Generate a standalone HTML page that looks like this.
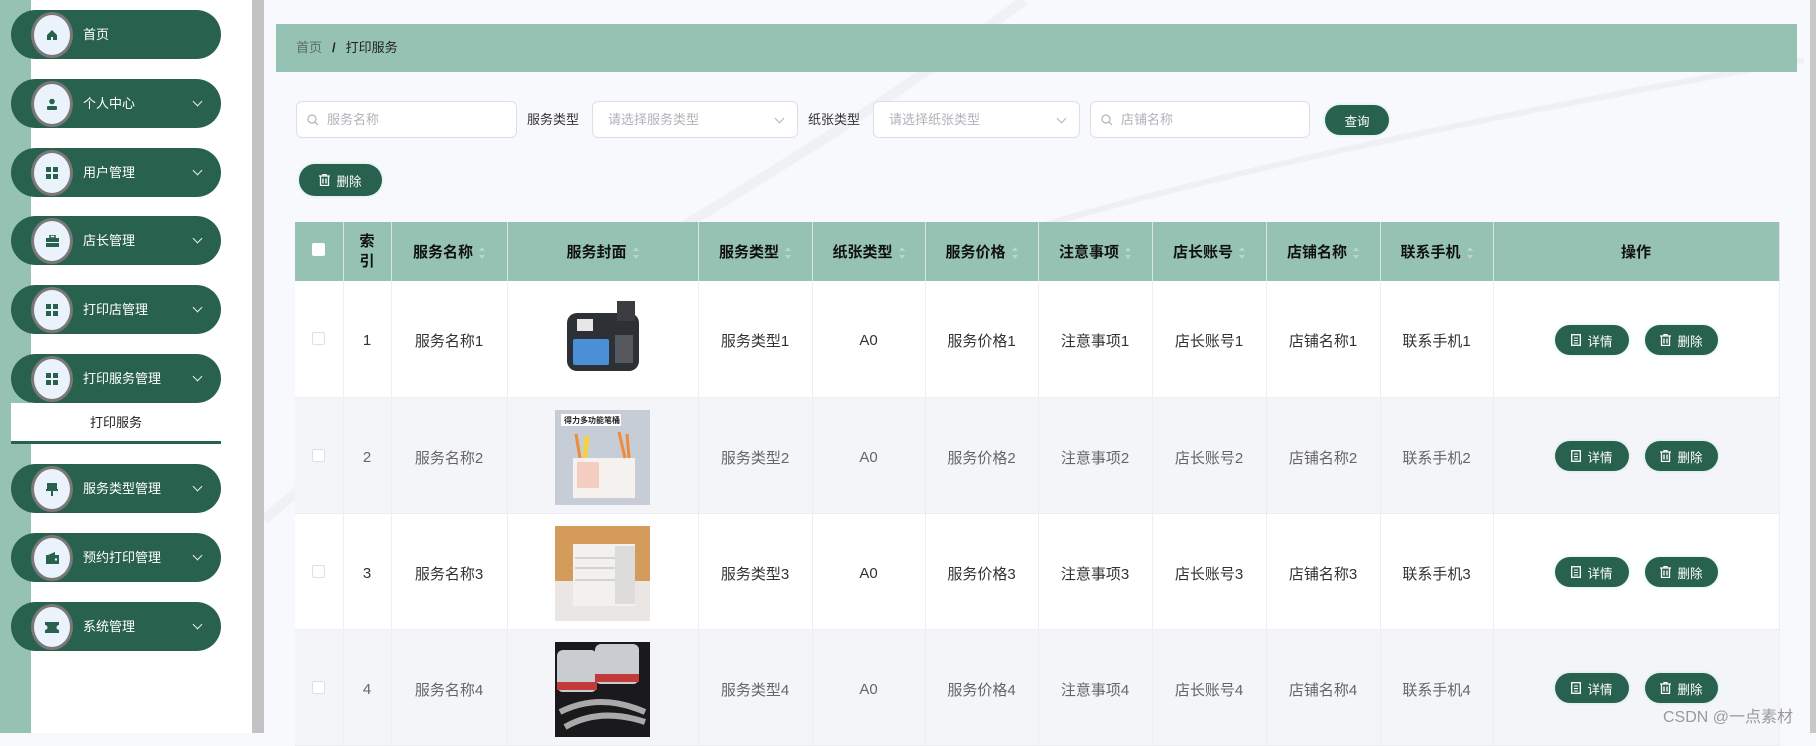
<!DOCTYPE html>
<html><head><meta charset="utf-8"><style>
*{box-sizing:border-box;margin:0;padding:0}
body{width:1816px;height:733px;overflow:hidden;background:#f8f9fc;font-family:"Liberation Sans","Noto Sans CJK SC",sans-serif;position:relative}
.abs{position:absolute}
.strip{left:0;top:0;width:31px;height:733px;background:#96c2b4}
.side{left:31px;top:0;width:221px;height:733px;background:#fff}
.gbar{left:252px;top:0;width:12px;height:733px;background:#c3c3c3}
.item{position:absolute;left:11px;width:210px;height:49px;border-radius:25px;background:#29614f;color:#fff;font-size:13px}
.item .c{position:absolute;left:20px;top:2px;width:42px;height:46px;border-radius:50%;background:#eaf2fb;border:3px solid #7a7778;display:flex;align-items:center;justify-content:center}
.item .t{position:absolute;left:72px;top:0;line-height:49px}
.item .ch{position:absolute;left:183px;top:19px;width:7px;height:7px;border-right:1.3px solid #e8efe9;border-bottom:1.3px solid #e8efe9;transform:rotate(45deg)}
.bc{left:276px;top:24px;width:1521px;height:48px;background:#96c2b4;font-size:13px;line-height:48px;padding-left:20px;color:#222}
.inp{position:absolute;height:37px;border:1px solid #dcdfe6;border-radius:6px;background:#fff;font-size:13px;color:#b0b3b8;line-height:35px}
.lbl{position:absolute;font-size:13px;color:#333;line-height:37px;top:101px}
.btn{position:absolute;background:#29614f;color:#fff;border-radius:16px;font-size:12.5px;display:flex;align-items:center;justify-content:center;box-shadow:0 0 3px #bfe9dc}
table{position:absolute;left:295px;top:222px;border-collapse:collapse;table-layout:fixed;width:1484px}
th{background:#96c2b4;height:59px;font-size:15px;font-weight:bold;color:#111;border-right:1px solid #d9e6e1}
td{height:116px;text-align:center;font-size:15px;color:#333;border-right:1px solid #eceef2;border-bottom:1px solid #eceef2;background:#fff;padding-top:4px}
tr.e td{background:#f3f5f9;color:#666}
.sort{display:inline-block;width:6px;height:12px;margin-left:6px;vertical-align:middle;position:relative}
.sort:before{content:"";position:absolute;top:0;left:0;border:3px solid transparent;border-bottom:4px solid #b9d6cc;border-top:0}
.sort:after{content:"";position:absolute;bottom:0;left:0;border:3px solid transparent;border-top:4px solid #b9d6cc;border-bottom:0}
.cb{display:inline-block;width:13px;height:13px;border:1px solid #dcdfe6;border-radius:2px;background:#fff}
.img{display:inline-block;width:95px;height:95px;vertical-align:middle}
</style></head><body>
<div class="abs strip"></div><div class="abs side"></div><div class="abs gbar"></div>

<div class="item" style="top:10px"><div class="c"><svg width="12" height="12" viewBox="0 0 12 12"><path d="M6 1L1 6v5h4V8h2v3h4V6z" fill="#29614f"/></svg></div><div class="t">首页</div></div>
<div class="item" style="top:79px"><div class="c"><svg width="12" height="12" viewBox="0 0 12 12"><circle cx="6" cy="3.5" r="2.8" fill="#29614f"/><rect x="1" y="8" width="10" height="4" rx="1" fill="#29614f"/></svg></div><div class="t">个人中心</div><div class="ch"></div></div>
<div class="item" style="top:148px"><div class="c"><svg width="12" height="12" viewBox="0 0 12 12" fill="#29614f"><rect x="0" y="0" width="5" height="5"/><rect x="7" y="0" width="5" height="5"/><rect x="0" y="7" width="5" height="5"/><rect x="7" y="7" width="5" height="5"/></svg></div><div class="t">用户管理</div><div class="ch"></div></div>
<div class="item" style="top:216px"><div class="c"><svg width="13" height="12" viewBox="0 0 13 12" fill="#29614f"><rect x="4" y="0" width="5" height="3" fill="none" stroke="#29614f" stroke-width="1.5"/><rect x="0" y="3" width="13" height="4"/><rect x="0" y="8" width="13" height="4"/></svg></div><div class="t">店长管理</div><div class="ch"></div></div>
<div class="item" style="top:285px"><div class="c"><svg width="12" height="12" viewBox="0 0 12 12" fill="#29614f"><rect x="0" y="0" width="5" height="5"/><rect x="7" y="0" width="5" height="5"/><rect x="0" y="7" width="5" height="5"/><rect x="7" y="7" width="5" height="5"/></svg></div><div class="t">打印店管理</div><div class="ch"></div></div>
<div class="item" style="top:354px"><div class="c"><svg width="12" height="12" viewBox="0 0 12 12" fill="#29614f"><rect x="0" y="0" width="5" height="5"/><rect x="7" y="0" width="5" height="5"/><rect x="0" y="7" width="5" height="5"/><rect x="7" y="7" width="5" height="5"/></svg></div><div class="t">打印服务管理</div><div class="ch"></div></div>
<div class="abs" style="left:11px;top:403px;width:210px;height:39px;background:#fff;text-align:center;line-height:39px;font-size:13px;color:#222">打印服务</div>
<div class="abs" style="left:11px;top:441px;width:210px;height:3px;background:#29614f"></div>
<div class="item" style="top:464px"><div class="c"><svg width="12" height="13" viewBox="0 0 12 13" fill="#29614f"><rect x="1" y="0" width="10" height="6"/><rect x="0" y="6" width="12" height="2"/><rect x="5" y="8" width="2" height="5"/></svg></div><div class="t">服务类型管理</div><div class="ch"></div></div>
<div class="item" style="top:533px"><div class="c"><svg width="13" height="12" viewBox="0 0 13 12" fill="#29614f"><rect x="0" y="3" width="13" height="9"/><path d="M2 3L9 0v3z"/><circle cx="10" cy="7.5" r="1.2" fill="#eaf2fb"/></svg></div><div class="t">预约打印管理</div><div class="ch"></div></div>
<div class="item" style="top:602px"><div class="c"><svg width="14" height="11" viewBox="0 0 14 11" fill="#29614f"><path d="M0 0h14v3a2.5 2.5 0 000 5v3H0V8a2.5 2.5 0 000-5z"/></svg></div><div class="t">系统管理</div><div class="ch"></div></div>

<svg class="abs" style="left:264px;top:0" width="1540" height="733"><path d="M0 520 C250 300 500 200 760 0" stroke="#f0f1f4" stroke-width="10" fill="none"/><path d="M560 300 C800 200 1200 120 1540 60" stroke="#eef0f4" stroke-width="6" fill="none"/></svg>

<div class="abs bc"><span style="color:#5b6b66">首页</span><span style="margin:0 10px;font-weight:bold">/</span>打印服务</div>

<div class="inp" style="left:296px;top:101px;width:221px;padding-left:30px">服务名称<svg class="abs" style="left:10px;top:12px" width="12" height="12"><circle cx="5" cy="5" r="4" fill="none" stroke="#b0b3b8" stroke-width="1.2"/><path d="M8 8l3 3" stroke="#b0b3b8" stroke-width="1.2"/></svg></div>
<div class="lbl" style="left:527px">服务类型</div>
<div class="inp" style="left:592px;top:101px;width:206px;padding-left:15px">请选择服务类型<div class="abs" style="right:14px;top:13px;width:7px;height:7px;border-right:1px solid #b0b3b8;border-bottom:1px solid #b0b3b8;transform:rotate(45deg)"></div></div>
<div class="lbl" style="left:808px">纸张类型</div>
<div class="inp" style="left:873px;top:101px;width:207px;padding-left:15px">请选择纸张类型<div class="abs" style="right:14px;top:13px;width:7px;height:7px;border-right:1px solid #b0b3b8;border-bottom:1px solid #b0b3b8;transform:rotate(45deg)"></div></div>
<div class="inp" style="left:1090px;top:101px;width:220px;padding-left:30px">店铺名称<svg class="abs" style="left:10px;top:12px" width="12" height="12"><circle cx="5" cy="5" r="4" fill="none" stroke="#b0b3b8" stroke-width="1.2"/><path d="M8 8l3 3" stroke="#b0b3b8" stroke-width="1.2"/></svg></div>
<div class="btn" style="left:1325px;top:105px;width:64px;height:30px;border-radius:15px">查询</div>
<div class="btn" style="left:299px;top:164px;width:83px;height:32px"><svg width="11" height="12" viewBox="0 0 11 12" style="margin-right:6px"><path d="M0 2h11M4 2V0.5h3V2M1.5 2v9.5h8V2M4 4.5v5M7 4.5v5" stroke="#fff" stroke-width="1.3" fill="none"/></svg>删除</div>

<table>
<colgroup><col style="width:48px"><col style="width:48px"><col style="width:116px"><col style="width:191px"><col style="width:114px"><col style="width:113px"><col style="width:113px"><col style="width:114px"><col style="width:114px"><col style="width:114px"><col style="width:113px"><col style="width:286px"></colgroup>
<tr><th><span class="cb" style="border:none"></span></th><th style="line-height:20px">索<br>引</th><th>服务名称<i class="sort"></i></th><th>服务封面<i class="sort"></i></th><th>服务类型<i class="sort"></i></th><th>纸张类型<i class="sort"></i></th><th>服务价格<i class="sort"></i></th><th>注意事项<i class="sort"></i></th><th>店长账号<i class="sort"></i></th><th>店铺名称<i class="sort"></i></th><th>联系手机<i class="sort"></i></th><th>操作</th></tr>
<tr><td><span class="cb"></span></td><td>1</td><td>服务名称1</td><td><svg class="img" viewBox="0 0 95 95"><rect x="12" y="20" width="72" height="58" rx="10" fill="#2d3035"/><rect x="62" y="8" width="18" height="20" fill="#3b3d42"/><rect x="18" y="46" width="36" height="26" rx="2" fill="#4a8fd8"/><rect x="22" y="26" width="16" height="12" fill="#e7e7e7"/><rect x="60" y="42" width="18" height="28" fill="#55585e"/></svg></td><td>服务类型1</td><td>A0</td><td>服务价格1</td><td>注意事项1</td><td>店长账号1</td><td>店铺名称1</td><td>联系手机1</td><td class="op"></td></tr>
<tr class="e"><td><span class="cb"></span></td><td>2</td><td>服务名称2</td><td><svg class="img" viewBox="0 0 95 95"><rect width="95" height="95" fill="#c6cdd6"/><rect x="6" y="4" width="60" height="12" fill="#fff"/><text x="9" y="13" font-size="8" font-weight="bold" fill="#222">得力多功能笔桶</text><rect x="18" y="48" width="62" height="40" fill="#f4f1ee"/><rect x="22" y="52" width="22" height="26" fill="#f3cdbf"/><path d="M25 48l-4-24M70 48l-6-26M74 48l-2-24" stroke="#f08a3c" stroke-width="3"/><path d="M30 48l2-22" stroke="#f4d046" stroke-width="5"/></svg></td><td>服务类型2</td><td>A0</td><td>服务价格2</td><td>注意事项2</td><td>店长账号2</td><td>店铺名称2</td><td>联系手机2</td><td></td></tr>
<tr><td><span class="cb"></span></td><td>3</td><td>服务名称3</td><td><svg class="img" viewBox="0 0 95 95"><rect width="95" height="55" fill="#d49b5a"/><rect y="55" width="95" height="40" fill="#e9e6e3"/><rect x="18" y="18" width="62" height="62" fill="#f2f1ee"/><rect x="60" y="20" width="20" height="58" fill="#dcdcda"/><path d="M20 32h40M20 42h40M20 54h40" stroke="#b7b5b2"/></svg></td><td>服务类型3</td><td>A0</td><td>服务价格3</td><td>注意事项3</td><td>店长账号3</td><td>店铺名称3</td><td>联系手机3</td><td></td></tr>
<tr class="e"><td><span class="cb"></span></td><td>4</td><td>服务名称4</td><td><svg class="img" viewBox="0 0 95 95"><rect width="95" height="95" fill="#1a1a1c"/><rect x="2" y="8" width="40" height="42" rx="6" fill="#c9ccd0"/><rect x="40" y="2" width="44" height="40" rx="6" fill="#c9ccd0"/><rect x="2" y="40" width="40" height="8" fill="#c23a3a"/><rect x="40" y="32" width="44" height="8" fill="#c23a3a"/><path d="M5 70q40-20 85 0M10 85q35-20 80-5" stroke="#aaa" stroke-width="6" fill="none"/></svg></td><td>服务类型4</td><td>A0</td><td>服务价格4</td><td>注意事项4</td><td>店长账号4</td><td>店铺名称4</td><td>联系手机4</td><td></td></tr>
</table>

<div class="btn" style="left:1555px;top:325px;width:74px;height:30px"><svg width="10" height="12" viewBox="0 0 10 12" style="margin-right:6px"><rect x=".7" y=".7" width="8.6" height="10.6" stroke="#fff" stroke-width="1.3" fill="none"/><path d="M3 4h4M3 6.5h4M3 9h4" stroke="#fff"/></svg>详情</div>
<div class="btn" style="left:1645px;top:325px;width:73px;height:30px"><svg width="11" height="12" viewBox="0 0 11 12" style="margin-right:6px"><path d="M0 2h11M4 2V0.5h3V2M1.5 2v9.5h8V2M4 4.5v5M7 4.5v5" stroke="#fff" stroke-width="1.3" fill="none"/></svg>删除</div>
<div class="btn" style="left:1555px;top:441px;width:74px;height:30px"><svg width="10" height="12" viewBox="0 0 10 12" style="margin-right:6px"><rect x=".7" y=".7" width="8.6" height="10.6" stroke="#fff" stroke-width="1.3" fill="none"/><path d="M3 4h4M3 6.5h4M3 9h4" stroke="#fff"/></svg>详情</div>
<div class="btn" style="left:1645px;top:441px;width:73px;height:30px"><svg width="11" height="12" viewBox="0 0 11 12" style="margin-right:6px"><path d="M0 2h11M4 2V0.5h3V2M1.5 2v9.5h8V2M4 4.5v5M7 4.5v5" stroke="#fff" stroke-width="1.3" fill="none"/></svg>删除</div>
<div class="btn" style="left:1555px;top:557px;width:74px;height:30px"><svg width="10" height="12" viewBox="0 0 10 12" style="margin-right:6px"><rect x=".7" y=".7" width="8.6" height="10.6" stroke="#fff" stroke-width="1.3" fill="none"/><path d="M3 4h4M3 6.5h4M3 9h4" stroke="#fff"/></svg>详情</div>
<div class="btn" style="left:1645px;top:557px;width:73px;height:30px"><svg width="11" height="12" viewBox="0 0 11 12" style="margin-right:6px"><path d="M0 2h11M4 2V0.5h3V2M1.5 2v9.5h8V2M4 4.5v5M7 4.5v5" stroke="#fff" stroke-width="1.3" fill="none"/></svg>删除</div>
<div class="btn" style="left:1555px;top:673px;width:74px;height:30px"><svg width="10" height="12" viewBox="0 0 10 12" style="margin-right:6px"><rect x=".7" y=".7" width="8.6" height="10.6" stroke="#fff" stroke-width="1.3" fill="none"/><path d="M3 4h4M3 6.5h4M3 9h4" stroke="#fff"/></svg>详情</div>
<div class="btn" style="left:1645px;top:673px;width:73px;height:30px"><svg width="11" height="12" viewBox="0 0 11 12" style="margin-right:6px"><path d="M0 2h11M4 2V0.5h3V2M1.5 2v9.5h8V2M4 4.5v5M7 4.5v5" stroke="#fff" stroke-width="1.3" fill="none"/></svg>删除</div>

<div class="abs" style="left:1663px;top:703px;font-size:16px;color:#9a9a9a">CSDN @一点素材</div>
<div class="abs" style="left:1810px;top:0;width:6px;height:733px;background:#c8c8c8"></div>
</body></html>
